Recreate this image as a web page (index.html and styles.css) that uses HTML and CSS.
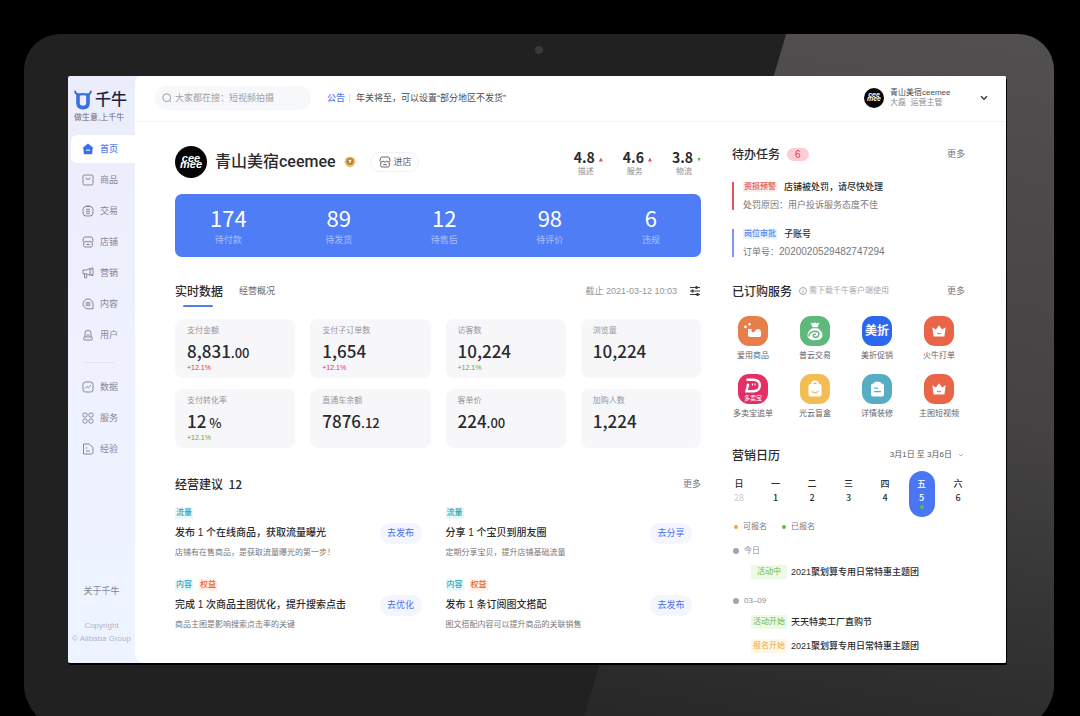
FILE: index.html
```html
<!DOCTYPE html>
<html lang="zh-CN">
<head>
<meta charset="utf-8">
<meta name="viewport" content="width=device-width, initial-scale=1">
<title>千牛工作台</title>
<link rel="stylesheet" href="styles.css">
</head>
<body>
<svg class="defs" aria-hidden="true">
  <symbol id="store" viewBox="0 0 12 12">
    <path d="M2.800 1h6.400q.8 0 1.100.9l.8 2.300c0 2.400-3.200 2.400-3.300.6-.2 1.700-3.400 1.700-3.600 0C4.100 6.600.9 6.600.9 4.200l.8-2.300Q2 1 2.800 1zM1.700 6.400V9.500q0 1.500 1.500 1.500h5.600q1.500 0 1.500-1.500V6.400M4.200 8.600h3.600"/>
  </symbol>
  <symbol id="crown" viewBox="0 0 30 30">
    <path fill="#fff" d="M8.300 11.200l3.600 2.300L15 9.200l3.100 4.300 3.600-2.300-1.300 9.300H9.600z"/>
    <path d="M13 17.200q2 1.500 4 0" fill="none" stroke="#ea6547" stroke-width="1"/>
  </symbol>
</svg>

<div class="device">
  <div class="camera"></div>
  <div class="screen">
    <aside class="sidebar">
      <div class="brand">
        <div class="brand-row">
          <svg class="brand-mark" viewBox="0 0 18 20" fill="none" stroke="#3a6fdd" stroke-linecap="round">
            <path d="M1.200 1.500q.3 3 3.400 2.900M16.800 1.500q-.3 3-3.400 2.900" stroke-width="2"/>
            <path d="M4 5.200V13q0 4.600 5 4.600t5-4.600V5.200" stroke-width="3.600"/>
            <path d="M4 4.900q5-1.500 10 0" stroke-width="2.400"/>
          </svg>
          <span class="brand-name">千牛</span>
        </div>
        <div class="slogan">做生意,上千牛</div>
      </div>
      <nav class="nav">
        <ul class="nav-list">
          <li><a class="nav-item active" href="#"><svg class="ico" viewBox="0 0 12 12"><path d="M6 .6l5.300 4.200q.5.5-.1.700h-.8v4.200q0 1.500-1.500 1.500H3.100q-1.500 0-1.500-1.500V5.500H.8q-.6-.2-.1-.7z" fill="#3b6fe4" stroke="none"/><path d="M4 7.200h4" stroke="#fff"/></svg>首页</a></li>
          <li><a class="nav-item" href="#"><svg class="ico" viewBox="0 0 12 12"><rect x="1" y="1" width="10" height="10" rx="1.500"/><path d="M4 3.500q0 2 2 2t2-2"/></svg>商品</a></li>
          <li><a class="nav-item" href="#"><svg class="ico" viewBox="0 0 12 12"><rect x="1" y="1.500" width="10" height="9.500" rx="3"/><path d="M3.800 1h4.400M4 4.300h4M4 6.300h4M4 8.300h4"/></svg>交易</a></li>
          <li><a class="nav-item" href="#"><svg class="ico"><use href="#store"/></svg>店铺</a></li>
          <li><a class="nav-item" href="#"><svg class="ico" viewBox="0 0 12 12"><path d="M1 3h3.500L8 1.300v7L4.500 6.800H1zM2.500 7v3.800h2.200V7M8 2.600h1.200V1h1.800v7.500H9.200V7H8"/></svg>营销</a></li>
          <li><a class="nav-item" href="#"><svg class="ico" viewBox="0 0 12 12"><path d="M6 1a5 5 0 0 1 5 5v4.800H6A4.900 4.900 0 1 1 6 1z"/><path d="M5 3.700v4.600M7.200 3.700v4.600M3.700 5h4.800M3.700 7.200h4.800" stroke-width=".8"/></svg>内容</a></li>
          <li><a class="nav-item" href="#"><svg class="ico" viewBox="0 0 12 12"><path d="M3 8V4.300a3 3 0 0 1 6 0V8M4.500 5.800q1.500 1 3 0"/><rect x="1.600" y="8" width="8.800" height="3" rx="1.200"/></svg>用户</a></li>
        </ul>
        <hr class="nav-rule">
        <ul class="nav-list">
          <li><a class="nav-item" href="#"><svg class="ico" viewBox="0 0 12 12"><rect x="1" y="1" width="10" height="10" rx="2.500"/><path d="M3.200 7.500l2-2 1.200 1.200 2.500-2.400"/></svg>数据</a></li>
          <li><a class="nav-item" href="#"><svg class="ico" viewBox="0 0 12 12"><rect x="1" y="1" width="4" height="4" rx="1.400"/><rect x="7" y="1" width="4" height="4" rx="1.400"/><rect x="1" y="7" width="4" height="4" rx="1.400"/><rect x="7" y="7" width="4" height="4" rx="1.400"/></svg>服务</a></li>
          <li><a class="nav-item" href="#"><svg class="ico" viewBox="0 0 12 12"><path d="M1.500 1h5.700L11 4.500V9.500q0 1.500-1.500 1.500h-8zM3.800 5h1.500M3.800 8h4"/></svg>经验</a></li>
        </ul>
      </nav>
      <footer class="side-foot">
        <a class="about" href="#">关于千牛</a>
        <small class="copyright">Copyright<br>© Alibaba Group</small>
      </footer>
    </aside>

    <div class="main">
      <header class="topbar">
        <label class="search">
          <svg class="search-ico" viewBox="0 0 10 10"><circle cx="4.700" cy="4.700" r="3.900"/><path d="M7.500 7.500L9.200 9.200"/></svg>
          <input type="search" aria-label="搜索" placeholder="大家都在搜：短视频拍摄">
        </label>
        <p class="notice"><b>公告</b><i></i><span>年关将至，可以设置“部分地区不发货”</span></p>
        <button class="account" type="button">
          <span class="avatar small">cee<br>mee</span>
          <span class="account-text"><span>青山美宿ceemee</span><span class="role">大磊&nbsp; 运营主管</span></span>
          <svg class="caret" viewBox="0 0 8 6"><path d="M1 1.300l3 3 3-3"/></svg>
        </button>
      </header>

      <div class="content">
        <main class="left">
          <section class="shop">
            <span class="avatar">cee<br>mee</span>
            <h1>青山美宿ceemee</h1>
            <svg class="medal" viewBox="0 0 12 12"><path d="M6 .5l4.300 1.600L11.500 6 9.600 9.700 6 11.500 2.400 9.700.5 6l1.200-3.900z" fill="#e8bd72"/><circle cx="6" cy="5.500" r="3.400" fill="#b97a35"/><path d="M4.300 3.800h3.400L6 8z" fill="#fff3d5"/></svg>
            <button class="enter" type="button"><svg class="ico"><use href="#store"/></svg>进店</button>
            <dl class="scores">
              <div><dd>4.8<i class="up"></i></dd><dt>描述</dt></div>
              <div><dd>4.6<i class="up"></i></dd><dt>服务</dt></div>
              <div><dd>3.8<i class="down"></i></dd><dt>物流</dt></div>
            </dl>
          </section>

          <dl class="banner">
            <div><dd>174</dd><dt>待付款</dt></div>
            <div><dd>89</dd><dt>待发货</dt></div>
            <div><dd>12</dd><dt>待售后</dt></div>
            <div><dd>98</dd><dt>待评价</dt></div>
            <div><dd>6</dd><dt>违规</dt></div>
          </dl>

          <div class="tabs">
            <button class="tab on" type="button">实时数据</button>
            <button class="tab" type="button">经营概况</button>
            <span class="asof">截止 2021-03-12 10:03</span>
            <button class="filter" type="button" aria-label="设置指标"><svg viewBox="0 0 12 12"><path d="M1 2.500h10M1 6h10M1 9.500h10"/><path d="M7.500 1v3M3.500 4.500v3M8.500 8v3" stroke-width="2"/></svg></button>
          </div>

          <dl class="cards">
            <div class="card"><dt>支付金额</dt><dd>8,831<small>.00</small></dd><dd class="delta red">+12.1%</dd></div>
            <div class="card"><dt>支付子订单数</dt><dd>1,654</dd><dd class="delta red">+12.1%</dd></div>
            <div class="card"><dt>访客数</dt><dd>10,224</dd><dd class="delta green">+12.1%</dd></div>
            <div class="card"><dt>浏览量</dt><dd>10,224</dd></div>
            <div class="card"><dt>支付转化率</dt><dd>12<small> %</small></dd><dd class="delta green">+12.1%</dd></div>
            <div class="card"><dt>直通车余额</dt><dd>7876<small>.12</small></dd></div>
            <div class="card"><dt>客单价</dt><dd>224<small>.00</small></dd></div>
            <div class="card"><dt>加购人数</dt><dd>1,224</dd></div>
          </dl>

          <section class="advice">
            <div class="head"><h2>经营建议&nbsp; 12</h2><a class="more" href="#">更多</a></div>
            <div class="advice-grid">
              <article class="tip"><p class="tags"><span class="tag cyan">流量</span></p><h3>发布 1 个在线商品，获取流量曝光</h3><button type="button">去发布</button><p class="desc">店铺有在售商品，是获取流量曝光的第一步！</p></article>
              <article class="tip"><p class="tags"><span class="tag cyan">流量</span></p><h3>分享 1 个宝贝到朋友圈</h3><button type="button">去分享</button><p class="desc">定期分享宝贝，提升店铺基础流量</p></article>
              <article class="tip"><p class="tags"><span class="tag cyan">内容</span><span class="tag orange">权益</span></p><h3>完成 1 次商品主图优化，提升搜索点击</h3><button type="button">去优化</button><p class="desc">商品主图是影响搜索点击率的关键</p></article>
              <article class="tip"><p class="tags"><span class="tag cyan">内容</span><span class="tag orange">权益</span></p><h3>发布 1 条订阅图文搭配</h3><button type="button">去发布</button><p class="desc">图文搭配内容可以提升商品的关联销售</p></article>
            </div>
          </section>
        </main>

        <aside class="right">
          <section>
            <div class="head"><h2>待办任务</h2><span class="count">6</span><a class="more" href="#">更多</a></div>
            <ul class="tasks">
              <li class="task alert"><p><span class="tag red">资损预警</span><b>店铺被处罚，请尽快处理</b></p><p class="note">处罚原因：用户投诉服务态度不佳</p></li>
              <li class="task"><p><span class="tag blue">岗位审批</span><b>子账号</b></p><p class="note">订单号：<span class="order-no">2020020529482747294</span></p></li>
            </ul>
          </section>

          <section class="services">
            <div class="head"><h2>已订购服务</h2><span class="hint"><svg viewBox="0 0 8 8"><circle cx="4" cy="4" r="3.500"/><path d="M4 3.500V6M4 2v.7"/></svg>需下载千牛客户端使用</span><a class="more" href="#">更多</a></div>
            <ul class="apps">
              <li><a href="#"><svg viewBox="0 0 30 30"><rect width="30" height="30" rx="11" fill="#e87f4b"/><path d="M10 13h3.500v2.500q1 1.300 3 .3 1.500-3.300 4.300-2.600 2.700.9 2.200 3.800v2.500q0 1.500-1.500 1.500h-9q-2.500 0-2.500-2.500z" fill="#fff"/><circle cx="7.500" cy="10.800" r="1.400" fill="#fff"/><circle cx="11.500" cy="8.300" r="1.300" fill="#fff"/></svg>爱用商品</a></li>
              <li><a href="#"><svg viewBox="0 0 30 30"><rect width="30" height="30" rx="11" fill="#5fb97c"/><path d="M10.500 6.500l2.700 1L15 6.300l1.800 1.200 2.700-1-2 4.700h-5z" fill="#fff"/><path d="M12 12.300h6q4.500 3.200 4.500 6.900 0 5-7.500 5t-7.500-5q0-3.700 4.500-6.900z" fill="#fff"/><path d="M9 20.500q-.3-4.500 5.500-5.300 5 0 4.300 3.600-.8 3-4.300 2.400-2.300-1.400-.6-2.800 1.400-.7 1.800.5" fill="none" stroke="#5fb97c" stroke-width="1.500"/></svg>普云交易</a></li>
              <li><a href="#"><svg viewBox="0 0 30 30"><rect width="30" height="30" rx="11" fill="#2c68ee"/><text x="15" y="19" font-size="12" font-weight="700" text-anchor="middle" fill="#fff">美折</text><path d="M15.300 14.500l2.200 1.800" stroke="#f0566a" stroke-width="1.300"/></svg>美折促销</a></li>
              <li><a href="#"><svg viewBox="0 0 30 30"><rect width="30" height="30" rx="11" fill="#ea6547"/><use href="#crown"/></svg>火牛打单</a></li>
              <li><a href="#"><svg viewBox="0 0 30 30"><rect width="30" height="30" rx="11" fill="#e32f66"/><path d="M8.500 5.800h7.500q5.800.6 5.800 5.700T16 17.200H8.500l1.700-7.500" fill="none" stroke="#fff" stroke-width="2.400"/><path d="M14.500 9.500v2M17 9.500v2" stroke="#fff"/><text x="15" y="26" font-size="6" text-anchor="middle" fill="#fff">多卖宝</text></svg>多卖宝追单</a></li>
              <li><a href="#"><svg viewBox="0 0 30 30"><rect width="30" height="30" rx="11" fill="#f2bd52"/><path d="M12 10.500q0-3 3-3t3 3" fill="none" stroke="#fff" stroke-width="1.800"/><rect x="8.500" y="10" width="13" height="12.500" rx="2" fill="#fff"/><path d="M11.800 17.300q3.200 3 6.400 0" fill="none" stroke="#f2bd52" stroke-width="1.200"/></svg>光云盲盒</a></li>
              <li><a href="#"><svg viewBox="0 0 30 30"><rect width="30" height="30" rx="11" fill="#56adc4"/><rect x="9" y="9.500" width="13" height="13" rx="2" fill="#fff"/><rect x="12" y="7.700" width="7" height="4" rx="1.500" fill="#fff"/><path d="M12 14.200h4M12 17.700h7" stroke="#56adc4" stroke-width="1.200"/></svg>详情装修</a></li>
              <li><a href="#"><svg viewBox="0 0 30 30"><rect width="30" height="30" rx="11" fill="#ea6547"/><use href="#crown"/></svg>主图短视频</a></li>
            </ul>
          </section>

          <section class="calendar">
            <div class="head"><h2>营销日历</h2><button class="range" type="button">3月1日 至 3月6日<svg class="caret" viewBox="0 0 8 6"><path d="M2 2l2 2 2-2"/></svg></button></div>
            <ol class="week">
              <li class="off">日<span>28</span></li>
              <li>一<span>1</span></li>
              <li>二<span>2</span></li>
              <li>三<span>3</span></li>
              <li>四<span>4</span></li>
              <li class="today">五<span>5</span></li>
              <li>六<span>6</span></li>
            </ol>
            <p class="legend"><span class="open">可报名</span><span class="done">已报名</span></p>
            <div class="day">
              <h3>今日</h3>
              <p class="event"><span class="state">活动中</span>2021聚划算专用日常特惠主题团</p>
            </div>
            <div class="day">
              <h3>03–09</h3>
              <p class="event"><span class="state">活动开始</span>天天特卖工厂直购节</p>
              <p class="event"><span class="state wait">报名开始</span>2021聚划算专用日常特惠主题团</p>
            </div>
          </section>
        </aside>
      </div>
    </div>
  </div>
</div>
</body>
</html>
```

FILE: styles.css
```css
:root {
  --sans: "Liberation Sans", "Noto Sans CJK SC", sans-serif;
  --num: "Noto Sans CJK SC", sans-serif;
  --ink: #2b2b2e;
  --muted: #8d8d92;
  --pale: #a9a9ae;
  --blue: #4f7df5;
}

* { box-sizing: border-box; }

body, h1, h2, h3, p, ul, ol, dl, dd, dt, hr { margin: 0; padding: 0; }

ul, ol { list-style: none; }

a { color: inherit; text-decoration: none; }

button {
  padding: 0;
  border: 0;
  background: none;
  color: inherit;
  font: inherit;
  cursor: pointer;
}

body {
  height: 100vh;
  overflow: hidden;
  background: #000;
  color: var(--ink);
  font: 9px/12px var(--sans);
}

svg { display: block; flex: none; }

.defs { position: absolute; width: 0; height: 0; }

/* Tablet shell */
.device {
  position: relative;
  margin: 34px 26px 0 24px;
  padding: 42px 48px 67px 44px;
  border-radius: 36px 36px 46px 46px;
  background: #222122;
  overflow: hidden;
}

.device::before {
  content: "";
  position: absolute;
  inset: 0;
  background: linear-gradient(190deg, #514f50 0%, #444243 45%, #302f30 75%, #272627 90%, #222122 100%);
  clip-path: polygon(74% 0, 100% 0, 100% 100%, 54% 100%);
}

.camera {
  position: absolute;
  top: 12px;
  left: 50%;
  width: 8px;
  height: 8px;
  margin-left: -4px;
  border-radius: 50%;
  background: #39383b;
}

.screen {
  position: relative;
  display: flex;
  border-radius: 2px;
  background: linear-gradient(#ecedfb, #eff1ff 50%, #edf4ff);
  box-shadow: 1px 2px 0 #000;
  overflow: hidden;
}

/* Sidebar */
.sidebar {
  flex: none;
  display: flex;
  flex-direction: column;
  width: 67px;
}

.brand { padding: 14px 0 11px 6px; }

.brand-row { display: flex; align-items: center; gap: 3px; height: 20px; }

.brand-mark { width: 18px; height: 20px; }

.brand-name { color: #1e2140; font-size: 16px; font-weight: 500; line-height: 20px; }

.slogan { margin-top: 2px; color: #66677a; font-size: 8px; white-space: nowrap; }

.nav-list { display: flex; flex-direction: column; gap: 3px; }

.nav-item {
  display: flex;
  align-items: center;
  gap: 6px;
  height: 28px;
  margin-left: 3px;
  padding-left: 11px;
  border-radius: 6px 0 0 6px;
  color: #85869a;
}

.nav-item.active { background: #fff; color: #5b83ea; font-weight: 500; }

.ico { width: 12px; height: 12px; fill: none; stroke: #85869a; stroke-width: 1; }

.nav-rule { height: 1px; margin: 13px 21px 10px 14px; border: 0; background: #e0e3f4; }

.side-foot { margin-top: auto; padding-bottom: 18px; color: #85869a; text-align: center; }

.about { display: block; margin-bottom: 21px; line-height: 13px; }

.copyright { display: block; color: #b3b5c6; font-size: 8px; line-height: 13px; white-space: nowrap; }

/* Round shop logo */
.avatar {
  flex: none;
  width: 32px;
  height: 32px;
  padding-top: 9px;
  border-radius: 50%;
  background: #050505;
  color: #fff;
  font: italic 700 11px/6px var(--sans);
  text-align: center;
}

.avatar.small { width: 20px; height: 20px; padding-top: 5px; font-size: 7px; line-height: 4px; }

/* Top bar */
.main { flex: 1; min-width: 0; border-radius: 6px 0 0 10px; background: #fff; }

.topbar {
  display: flex;
  align-items: center;
  height: 46px;
  padding: 0 18px 1px 20px;
  border-bottom: 1px solid #f3f3f5;
}

.search {
  display: flex;
  align-items: center;
  gap: 3px;
  width: 156px;
  height: 24px;
  padding: 0 6px 0 7px;
  border-radius: 12px;
  background: #f7f8fa;
}

.search-ico { width: 10px; height: 10px; fill: none; stroke: #9c9ca2; }

.search input {
  width: 100%;
  padding: 0;
  border: 0;
  outline: 0;
  background: none;
  font: 9px/12px var(--sans);
}

.search input::placeholder { color: #a0a0a6; }

.notice { display: flex; align-items: center; margin-left: 16px; color: #4b4b50; }

.notice b { color: var(--blue); font-weight: 500; }

.notice i { width: 1px; height: 8px; margin: 0 6px 0 4px; background: #dcdce2; }

.account { display: flex; align-items: center; gap: 6px; margin-left: auto; text-align: left; }

.account-text { display: grid; width: 84px; color: #4b4b50; font-size: 8px; line-height: 10px; }

.role { color: var(--muted); }

.caret { width: 8px; height: 6px; fill: none; stroke: #3c3c40; stroke-width: 1.5; }

/* Two columns */
.content {
  display: grid;
  grid-template-columns: minmax(0, 1fr) 233px;
  gap: 31px;
  padding: 0 41px 10px 40px;
}

.head { display: flex; align-items: center; height: 20px; }

.head h2 { font: 500 12px/20px var(--num); }

.more { margin-left: auto; color: #77777c; }

/* Shop summary */
.shop { display: flex; align-items: center; height: 32px; margin-top: 24px; }

.shop h1 { margin-left: 8px; font: 500 16px/24px Roboto, "Noto Sans CJK SC", sans-serif; white-space: nowrap; }

.medal { width: 12px; height: 12px; margin-left: 8px; }

.enter {
  display: flex;
  align-items: center;
  gap: 3px;
  height: 20px;
  margin-left: 14px;
  padding: 0 6px 0 8px;
  border: 1px solid #f2f2f4;
  border-radius: 10px;
  color: #66666b;
}

.enter .ico { stroke: #66666b; }

.scores { display: flex; gap: 20px; margin-left: auto; padding-top: 2px; }

.scores div { display: flex; flex-direction: column; }

.scores dd { display: flex; align-items: center; gap: 4px; height: 18px; font: 700 14px/16px var(--num); }

.scores dt { padding-left: 4px; color: var(--muted); font-size: 8px; }

.up, .down { width: 4px; height: 4px; margin-top: 5px; clip-path: polygon(50% 0, 100% 100%, 0 100%); background: #e8505b; }

.down { clip-path: polygon(0 0, 100% 0, 50% 100%); background: #64bf3b; }

/* Order banner */
.banner {
  display: flex;
  justify-content: space-between;
  align-items: center;
  height: 63px;
  margin-top: 16px;
  padding: 0 41px 0 35px;
  border-radius: 7px;
  background: var(--blue);
  color: #fff;
  text-align: center;
}

.banner dd { margin-bottom: 4px; font: 400 22px/24px var(--num); }

.banner dt { color: #a9c0fb; line-height: 14px; }

/* Live data */
.tabs { display: flex; height: 26px; margin-top: 24px; }

.tab { display: block; height: 20px; color: #66666b; line-height: 20px; }

.tab + .tab { margin-left: 16px; }

.tab.on { height: 26px; color: var(--ink); font-size: 12px; font-weight: 500; }

.tab.on::after { content: ""; display: block; width: 30px; height: 2px; margin: 3px 0 0 8px; border-radius: 1px; background: var(--blue); }

.asof { margin-left: auto; color: #96969b; line-height: 20px; }

.filter { height: 20px; margin-left: 12px; }

.filter svg { width: 12px; height: 12px; fill: none; stroke: #3c3c40; }

.cards { display: grid; grid-template-columns: repeat(4, 1fr); gap: 11px 15px; margin-top: 12px; }

.card { height: 59px; padding: 5px 0 0 12px; border-radius: 8px; background: #f7f7fa; }

.card dt { color: #96969b; font-size: 8px; line-height: 14px; }

.card dd { height: 26px; font: 500 17px/26px var(--num); }

.card small { font-size: 13px; }

.card .delta { height: 8px; font: 7px/8px var(--sans); }

.delta.red { color: #e0325c; }

.delta.green { color: #43b54a; }

/* Advice */
.advice { margin-top: 26px; }

.advice-grid {
  display: grid;
  grid-template-columns: 1fr 1fr;
  gap: 20px 24px;
  margin-top: 13px;
  padding-right: 9px;
}

.tip { display: grid; grid-template-columns: 1fr auto; align-items: center; row-gap: 3px; }

.tags, .desc { grid-column: 1 / -1; }

.tags { display: flex; gap: 6px; }

.tag { height: 12px; padding: 0 1px; font-size: 8px; font-weight: 500; line-height: 12px; white-space: nowrap; }

.tag.cyan { background: #e9f9fb; color: #35aabf; }

.tag.orange { background: #fff1ea; color: #e9662f; }

.tip h3 { font-size: 10px; font-weight: 500; line-height: 22px; white-space: nowrap; }

.tip button {
  width: 42px;
  height: 21px;
  border-radius: 11px;
  background: #f3f5ff;
  color: #4a70ee;
}

.desc { color: #77777c; font-size: 8px; }

/* Tasks */
.right { padding-top: 22px; }

.count {
  margin-left: 7px;
  padding: 0 8px;
  border-radius: 7px;
  background: #fcccd3;
  color: #dc3c50;
  font-size: 10px;
  line-height: 13px;
}

.tasks { display: grid; gap: 19px; margin-top: 18px; }

.task { display: grid; gap: 8px; padding-left: 9px; border-left: 2px solid #7d95f5; line-height: 10px; white-space: nowrap; }

.task.alert { border-color: #e5545c; }

.task p { display: flex; align-items: center; gap: 7px; }

.task b { font-weight: 500; }

.task .tag { height: 10px; line-height: 10px; }

.tag.red { background: #fdecea; color: #e2564d; }

.tag.blue { background: #eaf1ff; color: #5a86f0; }

.task .note { gap: 0; color: #77777c; }

.order-no { font-size: 10px; }

/* Services */
.services { margin-top: 24px; }

.hint { display: flex; align-items: center; gap: 2px; margin-left: 7px; color: var(--pale); font-size: 8px; }

.hint svg { width: 8px; height: 8px; fill: none; stroke: var(--pale); stroke-width: 1; }

.apps {
  display: grid;
  grid-template-columns: repeat(4, 42px);
  justify-content: space-between;
  row-gap: 12px;
  margin-top: 15px;
  padding-right: 5px;
}

.apps a { display: flex; flex-direction: column; align-items: center; gap: 4px; color: #66666b; font-size: 8px; white-space: nowrap; }

.apps svg { width: 30px; height: 30px; }

/* Calendar */
.calendar { margin-top: 25px; }

.range { display: flex; align-items: center; gap: 5px; margin-left: auto; color: #55555a; font-size: 8px; }

.range .caret { stroke: #b4b4ba; stroke-width: 1; }

.week {
  display: grid;
  grid-template-columns: repeat(7, 26px);
  justify-content: space-between;
  margin: 6px -6px 0;
  text-align: center;
}

.week li { height: 46px; padding-top: 6px; border-radius: 13px; font-weight: 500; line-height: 14px; }

.week span { display: block; font: 500 9px/14px var(--num); }

.week .off span { color: #c9c9ce; font-weight: 400; }

.week .today { background: #4a76f3; color: #fff; }

.week .today::after { content: ""; display: block; width: 4px; height: 4px; margin: 0 auto; border-radius: 50%; background: #52c045; }

.legend { display: flex; gap: 13px; margin-top: 4px; color: #77777c; font-size: 8px; }

.legend span, .day h3 { display: flex; align-items: center; gap: 5px; }

.legend span::before, .day h3::before { content: ""; width: 4px; height: 4px; margin-left: 2px; border-radius: 50%; background: #f2a33c; }

.legend .done::before { background: #5fbf36; }

.day { margin-top: 12px; }

.day + .day { margin-top: 16px; }

.day h3 { color: var(--muted); font-size: 8px; font-weight: 400; line-height: 12px; }

.day h3::before { width: 6px; height: 6px; margin-left: 1px; background: #a4a4a9; }

.event { display: flex; align-items: center; gap: 4px; height: 14px; margin-top: 8px; padding-left: 19px; font-weight: 500; white-space: nowrap; }

.event + .event { margin-top: 10px; }

.state { width: 36px; background: #eefae6; color: #6cb83f; font-size: 8px; font-weight: 400; line-height: 14px; text-align: center; }

.state.wait { background: #fff7e3; color: #f0a63a; }
```
